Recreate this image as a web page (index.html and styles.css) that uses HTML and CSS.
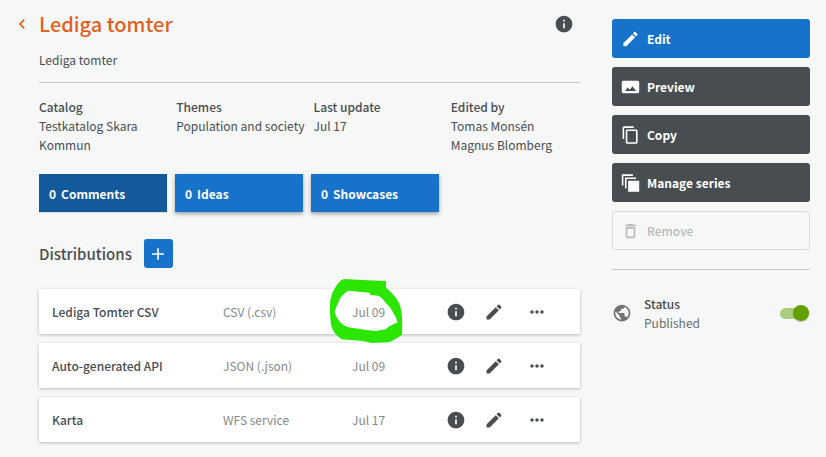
FILE: index.html
```html
<!DOCTYPE html>
<html lang="en">
<head>
  <meta charset="UTF-8">
  <title>Lediga tomter</title>
  <meta name="viewport" content="width=device-width, initial-scale=1.0">
  <link rel="stylesheet" href="styles.css">
</head>
<body>
  <!-- shared icons -->
  <svg class="sprite" aria-hidden="true">
    <symbol id="info" viewBox="0 0 24 24"><path d="M12 2C6.48 2 2 6.48 2 12s4.48 10 10 10 10-4.48 10-10S17.52 2 12 2zm1 15h-2v-6h2v6zm0-8h-2V7h2v2z"/></symbol>
    <symbol id="pen" viewBox="0 0 24 24"><path d="M3 17.25V21h3.75L17.81 9.94l-3.75-3.75L3 17.25zM20.71 7.04c.39-.39.39-1.02 0-1.41l-2.34-2.34c-.39-.39-1.02-.39-1.41 0l-1.83 1.83 3.75 3.75 1.83-1.83z"/></symbol>
    <symbol id="more" viewBox="0 0 24 24"><path d="M6 10c-1.1 0-2 .9-2 2s.9 2 2 2 2-.9 2-2-.9-2-2-2zm12 0c-1.1 0-2 .9-2 2s.9 2 2 2 2-.9 2-2-.9-2-2-2zm-6 0c-1.1 0-2 .9-2 2s.9 2 2 2 2-.9 2-2-.9-2-2-2z"/></symbol>
  </svg>

  <div class="page">
    <main>
      <header>
        <a href="#" class="back" aria-label="Back">
          <svg viewBox="0 0 24 24"><path d="M15.41 7.41L14 6l-6 6 6 6 1.41-1.41L10.83 12z"/></svg>
        </a>
        <h1>Lediga tomter</h1>
        <button class="icon-btn" aria-label="Information"><svg><use href="#info"/></svg></button>
      </header>
      <p class="description">Lediga tomter</p>

      <dl class="meta">
        <div><dt>Catalog</dt><dd>Testkatalog Skara Kommun</dd></div>
        <div><dt>Themes</dt><dd>Population and society</dd></div>
        <div><dt>Last update</dt><dd>Jul 17</dd></div>
        <div><dt>Edited by</dt><dd>Tomas Monsén</dd><dd>Magnus Blomberg</dd></div>
      </dl>

      <div class="tiles">
        <button class="active"><span>0</span>Comments</button>
        <button><span>0</span>Ideas</button>
        <button><span>0</span>Showcases</button>
      </div>

      <div class="section-title">
        <h2>Distributions</h2>
        <button class="add" aria-label="Add distribution">
          <svg viewBox="0 0 24 24"><path d="M19 13h-6v6h-2v-6H5v-2h6V5h2v6h6v2z"/></svg>
        </button>
      </div>

      <ul class="distributions">
        <li>
          <strong>Lediga Tomter CSV</strong>
          <span>CSV (.csv)</span>
          <span class="date">Jul 09
            <svg class="marker" viewBox="90 357 219 192" aria-hidden="true"><path fill-rule="evenodd" d="M132 357L200 361 258 363 258 383Q283 404 292 420Q304 440 304 457Q308 475 306 525L285 538Q270 547 262 547L215 549 190 543 125 538Q100 522 93 495Q88 455 91 420Q97 395 107 380Q118 362 132 357zM145 392L210 398 211 405 235 407Q246 412 258 430Q275 445 280 460Q288 470 293 487L268 499 257 508 225 513 200 510 145 502Q125 494 118 483Q105 466 104 455Q109 437 116 426Q120 410 135 399z"/></svg>
          </span>
          <div class="actions">
            <button class="icon-btn" aria-label="Information"><svg><use href="#info"/></svg></button>
            <button class="icon-btn" aria-label="Edit"><svg><use href="#pen"/></svg></button>
            <button class="icon-btn menu" aria-label="More"><svg><use href="#more"/></svg></button>
          </div>
        </li>
        <li>
          <strong>Auto-generated API</strong>
          <span>JSON (.json)</span>
          <span class="date">Jul 09</span>
          <div class="actions">
            <button class="icon-btn" aria-label="Information"><svg><use href="#info"/></svg></button>
            <button class="icon-btn" aria-label="Edit"><svg><use href="#pen"/></svg></button>
            <button class="icon-btn menu" aria-label="More"><svg><use href="#more"/></svg></button>
          </div>
        </li>
        <li>
          <strong>Karta</strong>
          <span>WFS service</span>
          <span class="date">Jul 17</span>
          <div class="actions">
            <button class="icon-btn" aria-label="Information"><svg><use href="#info"/></svg></button>
            <button class="icon-btn" aria-label="Edit"><svg><use href="#pen"/></svg></button>
            <button class="icon-btn menu" aria-label="More"><svg><use href="#more"/></svg></button>
          </div>
        </li>
      </ul>
    </main>

    <aside>
      <div class="side-buttons">
        <button class="primary"><svg><use href="#pen"/></svg>Edit</button>
        <button><svg viewBox="0 0 24 24"><path d="M23 18V6c0-1.100-.9-2-2-2H3c-1.100 0-2 .9-2 2v12c0 1.100.9 2 2 2h18c1.100 0 2-.9 2-2zM8.500 12.500l2.500 3.010L14.500 11l4.500 6H5l3.500-4.500z"/></svg>Preview</button>
        <button><svg viewBox="0 0 24 24"><path d="M16 1H4c-1.100 0-2 .9-2 2v14h2V3h12V1zm3 4H8c-1.100 0-2 .9-2 2v14c0 1.100.9 2 2 2h11c1.100 0 2-.9 2-2V7c0-1.100-.9-2-2-2zm0 16H8V7h11v14z"/></svg>Copy</button>
        <button><svg viewBox="0 0 24 24"><path d="M1 1h14v2H3v12H1zM5 5h14v2H7v12H5zM9 9h14v14H9z"/></svg>Manage series</button>
        <button disabled><svg viewBox="0 0 24 24"><path d="M6 19c0 1.100.9 2 2 2h8c1.100 0 2-.9 2-2V7H6v12zM8 9h8v10H8V9zm7.500-5l-1-1h-5l-1 1H5v2h14V4z"/></svg>Remove</button>
      </div>

      <div class="status">
        <svg viewBox="0 0 24 24"><path d="M12 2C6.480 2 2 6.480 2 12s4.480 10 10 10 10-4.480 10-10S17.520 2 12 2zm-1 17.930c-3.950-.49-7-3.850-7-7.930 0-.62.08-1.210.21-1.790L9 15v1c0 1.100.9 2 2 2v1.930zm6.900-2.540c-.26-.81-1-1.390-1.900-1.390h-1v-3c0-.55-.45-1-1-1H8v-2h2c.55 0 1-.45 1-1V7h2c1.100 0 2-.9 2-2v-.41c2.930 1.190 5 4.060 5 7.410 0 2.080-.8 3.970-2.100 5.390z"/></svg>
        <label for="published"><b>Status</b>Published</label>
        <input type="checkbox" role="switch" id="published" checked>
      </div>
    </aside>
  </div>
</body>
</html>
```
FILE: styles.css
```css
* {
  box-sizing: border-box;
}
body {
  margin: 0;
  background: #f6f8f8;
  color: #484d51;
  font: 12px/19px "Noto Sans CJK JP", "Noto Sans CJK SC", sans-serif;
}
h1, h2, p, dl, dd, ul {
  margin: 0;
}
button {
  border: 0;
  padding: 0;
  font: inherit;
  color: inherit;
  background: none;
  cursor: pointer;
}
svg {
  display: block;
  width: 20px;
  height: 20px;
  flex: none;
  fill: currentColor;
}
.sprite {
  position: absolute;
  width: 0;
  height: 0;
}
.page {
  display: flex;
  gap: 32px;
  padding: 8px 16px 8px 39px;
}
main {
  flex: 1;
  min-width: 0;
}

/* heading */
header {
  display: flex;
  align-items: center;
  height: 32px;
}
h1 {
  flex: 1;
  color: #e3601f;
  font-size: 20px;
  line-height: 32px;
  font-weight: 500;
}
.back {
  margin-left: -27px;
  padding-right: 7px;
  color: #e3601f;
}
.icon-btn {
  display: flex;
  justify-content: center;
  width: 38px;
}
header .icon-btn {
  width: 20px;
  margin-right: 6px;
}
.description {
  padding: 10px 0 13px;
  border-bottom: 1px solid #c4c6c7;
}

/* facts about the dataset */
.meta {
  display: grid;
  grid-template-columns: repeat(4, 1fr);
  gap: 8px;
  margin: 14px 0 20px;
}
dt, strong, b {
  font-weight: 500;
}

.tiles {
  display: flex;
  gap: 8px;
}
.tiles button {
  width: 128px;
  height: 38px;
  padding-left: 10px;
  text-align: left;
  color: white;
  font-weight: 700;
  background: #1673c9;
  box-shadow: 0 2px 4px rgba(0,0,0,0.35);
}
.tiles .active {
  background: #125a9c;
  box-shadow: 0 1px 1px rgba(0,0,0,0.1);
}
.tiles span {
  margin-right: 5px;
}

/* distributions */
.section-title {
  display: flex;
  align-items: center;
  gap: 12px;
  margin: 27px 0 21px;
}
h2 {
  font-size: 15px;
  line-height: 24px;
  font-weight: 500;
}
.add {
  display: flex;
  align-items: center;
  justify-content: center;
  width: 29px;
  height: 29px;
  border-radius: 3px;
  color: white;
  background: #1673c9;
}
.distributions {
  display: grid;
  gap: 9px;
  padding: 0;
  list-style: none;
}
.distributions li {
  display: grid;
  grid-template-columns: 171fr 129fr 85fr auto;
  align-items: center;
  height: 45px;
  padding: 0 19px 0 13px;
  color: #84888b;
  background: white;
  box-shadow: 0 1px 3px rgba(0,0,0,0.25);
}
.distributions strong, .actions {
  color: #484d51;
}
.date {
  position: relative;
}
.marker {
  position: absolute;
  left: -22px;
  top: -23px;
  z-index: 1;
  width: 73px;
  height: 64px;
  fill: #2ae600;
}
.actions {
  display: flex;
}
.menu {
  width: 48px;
}

/* sidebar */
aside {
  width: 198px;
  padding-top: 11px;
}
.side-buttons {
  display: grid;
  gap: 9px;
  padding-bottom: 19px;
  border-bottom: 1px solid #c4c6c7;
}
.side-buttons button {
  display: flex;
  align-items: center;
  gap: 7px;
  height: 39px;
  padding-left: 9px;
  border-radius: 3px;
  color: white;
  font-weight: 700;
  background: #484d51;
}
.side-buttons svg {
  width: 19px;
}
.side-buttons .primary {
  background: #1673c9;
}
.side-buttons button:disabled {
  padding-left: 8px;
  border: 1px solid #d9dbdb;
  color: #b8baba;
  font-weight: 500;
  background: none;
}
.status {
  display: flex;
  align-items: center;
  margin-top: 24px;
}
.status svg {
  color: #717375;
}
.status label {
  flex: 1;
  margin-left: 12px;
  color: #696c6e;
}
.status b {
  display: block;
  color: #484d51;
}
/* switch: the input is the track, the knob is ::after */
.status input {
  appearance: none;
  display: flex;
  align-items: center;
  justify-content: flex-end;
  width: 29px;
  height: 11px;
  margin: 0 1px 0 0;
  border-radius: 6px;
  background: #aacd7e;
}
.status input::after {
  content: "";
  width: 16px;
  height: 16px;
  border-radius: 50%;
  background: #62a000;
  box-shadow: 0 1px 1px rgba(0,0,0,0.2);
}
```
